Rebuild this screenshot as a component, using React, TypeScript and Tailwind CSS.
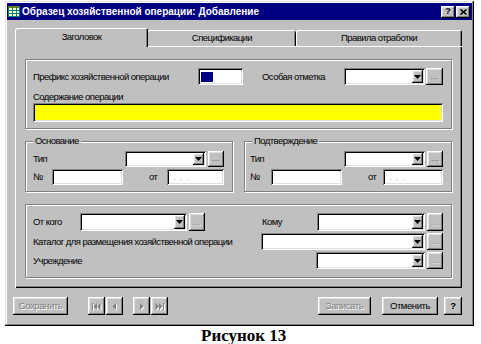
import React from "react";

const raised =
  "bg-[#c0c0c0] shadow-[inset_-1px_-1px_0_#000,inset_1px_1px_0_#fff,inset_-2px_-2px_0_#808080,inset_2px_2px_0_#dfdfdf]";
const sunken =
  "shadow-[inset_1px_1px_0_#808080,inset_-1px_-1px_0_#fff,inset_2px_2px_0_#000,inset_-2px_-2px_0_#dfdfdf]";
const etched =
  "border border-[#808080] shadow-[inset_1px_1px_0_#fff,1px_1px_0_#fff]";
const disabledText = "text-[#808080] [text-shadow:1px_1px_0_#fff]";

function Combo({ className }: { className: string }) {
  return (
    <div className={`${sunken} bg-white flex justify-end p-[2px] ${className}`}>
      <div className={`${raised} w-[11px] h-full flex items-center justify-center`}>
        <svg width="7" height="4" viewBox="0 0 7 4">
          <path d="M0 0h7L3.5 4z" fill="#000" />
        </svg>
      </div>
    </div>
  );
}

function Dots({ className, disabled }: { className: string; disabled?: boolean }) {
  return (
    <div className={`${raised} ${className} flex items-end justify-center pb-[4px]`}>
      <span
        className={`text-[8px] leading-none tracking-[0.5px] ${
          disabled ? disabledText : "text-[#404040]"
        }`}
      >
        ...
      </span>
    </div>
  );
}

function Field({ className, children }: { className: string; children?: React.ReactNode }) {
  return (
    <div className={`${sunken} bg-white flex items-center ${className}`}>{children}</div>
  );
}

function DateField({ className }: { className: string }) {
  return (
    <Field className={className}>
      <span className="ml-[6px] text-[9px] leading-none text-[#a8a8a8] tracking-[1px]">. . .</span>
    </Field>
  );
}

function Label({ className, children }: { className: string; children: React.ReactNode }) {
  return (
    <span className={`whitespace-nowrap text-[9.5px] tracking-[-0.55px] leading-[12px] text-black ${className}`}>
      {children}
    </span>
  );
}

function Btn({
  className,
  children,
  disabled,
}: {
  className: string;
  children: React.ReactNode;
  disabled?: boolean;
}) {
  return (
    <div
      className={`${raised} ${className} flex items-center justify-center text-[9.5px] tracking-[-0.4px] leading-none ${
        disabled ? disabledText : "text-black"
      }`}
    >
      {children}
    </div>
  );
}

function NavIcon({ kind }: { kind: "first" | "prev" | "next" | "last" }) {
  const c = "#808080";
  return (
    <svg width="9" height="7" viewBox="0 0 9 7" className="[filter:drop-shadow(1px_1px_0_#fff)]">
      {kind === "first" && (
        <>
          <rect x="0" y="0" width="1" height="7" fill={c} />
          <path d="M5 0v7L1.5 3.5z" fill={c} />
          <path d="M8.5 0v7L5 3.5z" fill={c} />
        </>
      )}
      {kind === "prev" && <path d="M6 0v7L2.5 3.5z" fill={c} />}
      {kind === "next" && <path d="M3 0v7l3.5-3.5z" fill={c} />}
      {kind === "last" && (
        <>
          <path d="M0.5 0v7L4 3.5z" fill={c} />
          <path d="M4 0v7l3.5-3.5z" fill={c} />
          <rect x="8" y="0" width="1" height="7" fill={c} />
        </>
      )}
    </svg>
  );
}

function Legend({ children }: { children: React.ReactNode }) {
  return (
    <span className="absolute left-[7px] top-[-7px] px-[2px] bg-[#c0c0c0] whitespace-nowrap text-[9.5px] tracking-[-0.55px] leading-[12px] text-black">
      {children}
    </span>
  );
}

export default function App() {
  return (
    <div className="w-[481px] h-[344px] bg-white overflow-hidden font-['Liberation_Sans',Arial,sans-serif]">
      {/* Window */}
      <div className="mt-[1px] ml-[5px] w-[469px] h-[325px] bg-[#c0c0c0] p-[2px] shadow-[inset_-1px_-1px_0_#000,inset_1px_1px_0_#dfdfdf,inset_-2px_-2px_0_#808080,inset_2px_2px_0_#fff] flex flex-col">
        {/* Title bar */}
        <div className="h-[17px] bg-[#000080] flex items-center pl-[1px] pr-[2px]">
          <svg width="12" height="11" viewBox="0 0 12 11">
            <rect x="0" y="0" width="12" height="11" fill="#ffffc0" />
            <rect x="0" y="0" width="12" height="2" fill="#808000" />
            <rect x="0" y="4" width="12" height="1" fill="#008080" />
            <rect x="0" y="7" width="12" height="1" fill="#008080" />
            <rect x="0" y="10" width="12" height="1" fill="#008080" />
            <rect x="0" y="0" width="1" height="11" fill="#008080" />
            <rect x="4" y="0" width="1" height="11" fill="#008080" />
            <rect x="8" y="0" width="1" height="11" fill="#008080" />
            <rect x="11" y="0" width="1" height="11" fill="#008080" />
          </svg>
          <span className="ml-[2px] text-white font-bold text-[10px] tracking-[0px] leading-none whitespace-nowrap">
            Образец хозяйственной операции: Добавление
          </span>
          <div className="ml-auto flex items-center">
            <div className={`${raised} w-[14px] h-[12px] flex items-center justify-center text-[9px] font-bold leading-none text-black`}>
              ?
            </div>
            <div className={`${raised} ml-[1px] w-[14px] h-[12px] flex items-center justify-center`}>
              <svg width="7" height="6" viewBox="0 0 7 6">
                <path d="M0.5 0.5L6.5 5.5M6.5 0.5L0.5 5.5" stroke="#000" strokeWidth="1.6" />
              </svg>
            </div>
          </div>
        </div>

        {/* Tabs */}
        <div className="mt-[8px] ml-[8px] h-[18px] flex items-end">
          <div className="relative z-10 -mb-px w-[133px] h-[19px] bg-[#c0c0c0] rounded-t-[2px] shadow-[inset_1px_1px_0_#fff,inset_-1px_0_0_#000,inset_-2px_0_0_#808080] flex items-center justify-center pb-[2px]">
            <Label className="">Заголовок</Label>
          </div>
          <div className="w-[148px] h-[16px] bg-[#c0c0c0] rounded-t-[2px] shadow-[inset_0_1px_0_#fff,inset_-1px_0_0_#000,inset_-2px_0_0_#808080] flex items-center justify-center">
            <Label className="">Спецификации</Label>
          </div>
          <div className="w-[166px] h-[16px] bg-[#c0c0c0] rounded-t-[2px] shadow-[inset_1px_1px_0_#fff,inset_-1px_0_0_#000,inset_-2px_0_0_#808080] flex items-center justify-center">
            <Label className="">Правила отработки</Label>
          </div>
        </div>

        {/* Panel */}
        <div className="ml-[8px] w-[447px] h-[242px] bg-[#c0c0c0] shadow-[inset_1px_1px_0_#fff,inset_-1px_-1px_0_#000,inset_-2px_-2px_0_#808080] pt-[13px] pl-[10px]">
          {/* Top group */}
          <div className={`${etched} w-[427px] h-[70px] pt-[8px] pl-[7px]`}>
            <div className="flex items-center h-[17px]">
              <Label className="w-[165px]">Префикс хозяйственной операции</Label>
              <Field className="w-[45px] h-[17px]">
                <div className="ml-[3px] w-[12px] h-[10px] bg-[#000080]" />
              </Field>
              <Label className="ml-[19px] w-[82px]">Особая отметка</Label>
              <Combo className="w-[81px] h-[17px]" />
              <Dots className="ml-[1px] w-[17px] h-[17px]" />
            </div>
            <div className="mt-[6px] h-[12px] flex items-center">
              <Label className="">Содержание операции</Label>
            </div>
            <Field className="w-[410px] h-[19px] !bg-[#ffff00]" />
          </div>

          {/* Middle groups */}
          <div className="mt-[12px] flex gap-[11px]">
            <div className={`${etched} relative w-[208px] h-[51px] pt-[9px] pl-[7px]`}>
              <Legend>Основание</Legend>
              <div className="flex items-center h-[16px]">
                <Label className="w-[92px]">Тип</Label>
                <Combo className="w-[81px] h-[16px]" />
                <Dots className="ml-[2px] w-[16px] h-[16px]" />
              </div>
              <div className="mt-[2px] flex items-center h-[16px]">
                <Label className="w-[19px]">№</Label>
                <Field className="w-[71px] h-[16px]" />
                <Label className="w-[44px] pl-[26px]">от</Label>
                <DateField className="w-[57px] h-[16px]" />
              </div>
            </div>
            <div className={`${etched} relative w-[208px] h-[51px] pt-[9px] pl-[5px]`}>
              <Legend>Подтверждение</Legend>
              <div className="flex items-center h-[16px]">
                <Label className="w-[94px]">Тип</Label>
                <Combo className="w-[81px] h-[16px]" />
                <Dots className="ml-[2px] w-[16px] h-[16px]" />
              </div>
              <div className="mt-[2px] flex items-center h-[16px]">
                <Label className="w-[21px]">№</Label>
                <Field className="w-[71px] h-[16px]" />
                <Label className="w-[41px] pl-[26px]">от</Label>
                <DateField className="w-[60px] h-[16px]" />
              </div>
            </div>
          </div>

          {/* Bottom group */}
          <div className={`${etched} mt-[12px] w-[427px] h-[74px] pt-[8px] pl-[7px]`}>
            <div className="flex items-center h-[18px]">
              <Label className="w-[47px]">От кого</Label>
              <Combo className="w-[107px] h-[18px]" />
              <Dots className="ml-[2px] w-[16px] h-[18px]" disabled />
              <Label className="ml-[57px] w-[55px]">Кому</Label>
              <Combo className="w-[108px] h-[18px]" />
              <Dots className="ml-[2px] w-[16px] h-[18px]" disabled />
            </div>
            <div className="mt-[2px] flex items-center h-[17px]">
              <Label className="w-[228px]">Каталог для размещения хозяйственной операции</Label>
              <Combo className="w-[164px] h-[17px]" />
              <Dots className="ml-[2px] w-[16px] h-[17px]" disabled />
            </div>
            <div className="mt-[2px] flex items-center h-[17px]">
              <Label className="w-[283px]">Учреждение</Label>
              <Combo className="w-[109px] h-[17px]" />
              <Dots className="ml-[2px] w-[16px] h-[17px]" disabled />
            </div>
          </div>
        </div>

        {/* Buttons */}
        <div className="mt-[9px] h-[18px] flex justify-between pl-[6px] pr-[10px]">
          <div className="flex">
            <Btn className="w-[55px] h-[18px]" disabled>
              Сохранить
            </Btn>
            <Btn className="ml-[20px] w-[17px] h-[18px]">
              <NavIcon kind="first" />
            </Btn>
            <Btn className="ml-[1px] w-[17px] h-[18px]">
              <NavIcon kind="prev" />
            </Btn>
            <Btn className="ml-[10px] w-[17px] h-[18px]">
              <NavIcon kind="next" />
            </Btn>
            <Btn className="ml-[1px] w-[17px] h-[18px]">
              <NavIcon kind="last" />
            </Btn>
          </div>
          <div className="flex">
            <Btn className="w-[53px] h-[18px]" disabled>
              Записать
            </Btn>
            <Btn className="ml-[11px] w-[56px] h-[18px]">Отменить</Btn>
            <Btn className="ml-[6px] w-[18px] h-[18px] font-bold">?</Btn>
          </div>
        </div>
      </div>

      {/* Caption */}
      <div className="mt-[1px] pl-[201px] h-[17px] font-['Liberation_Serif','Times_New_Roman',serif] font-bold text-[17px] leading-[17px] text-black whitespace-nowrap">
        Рисунок 13
      </div>
    </div>
  );
}
